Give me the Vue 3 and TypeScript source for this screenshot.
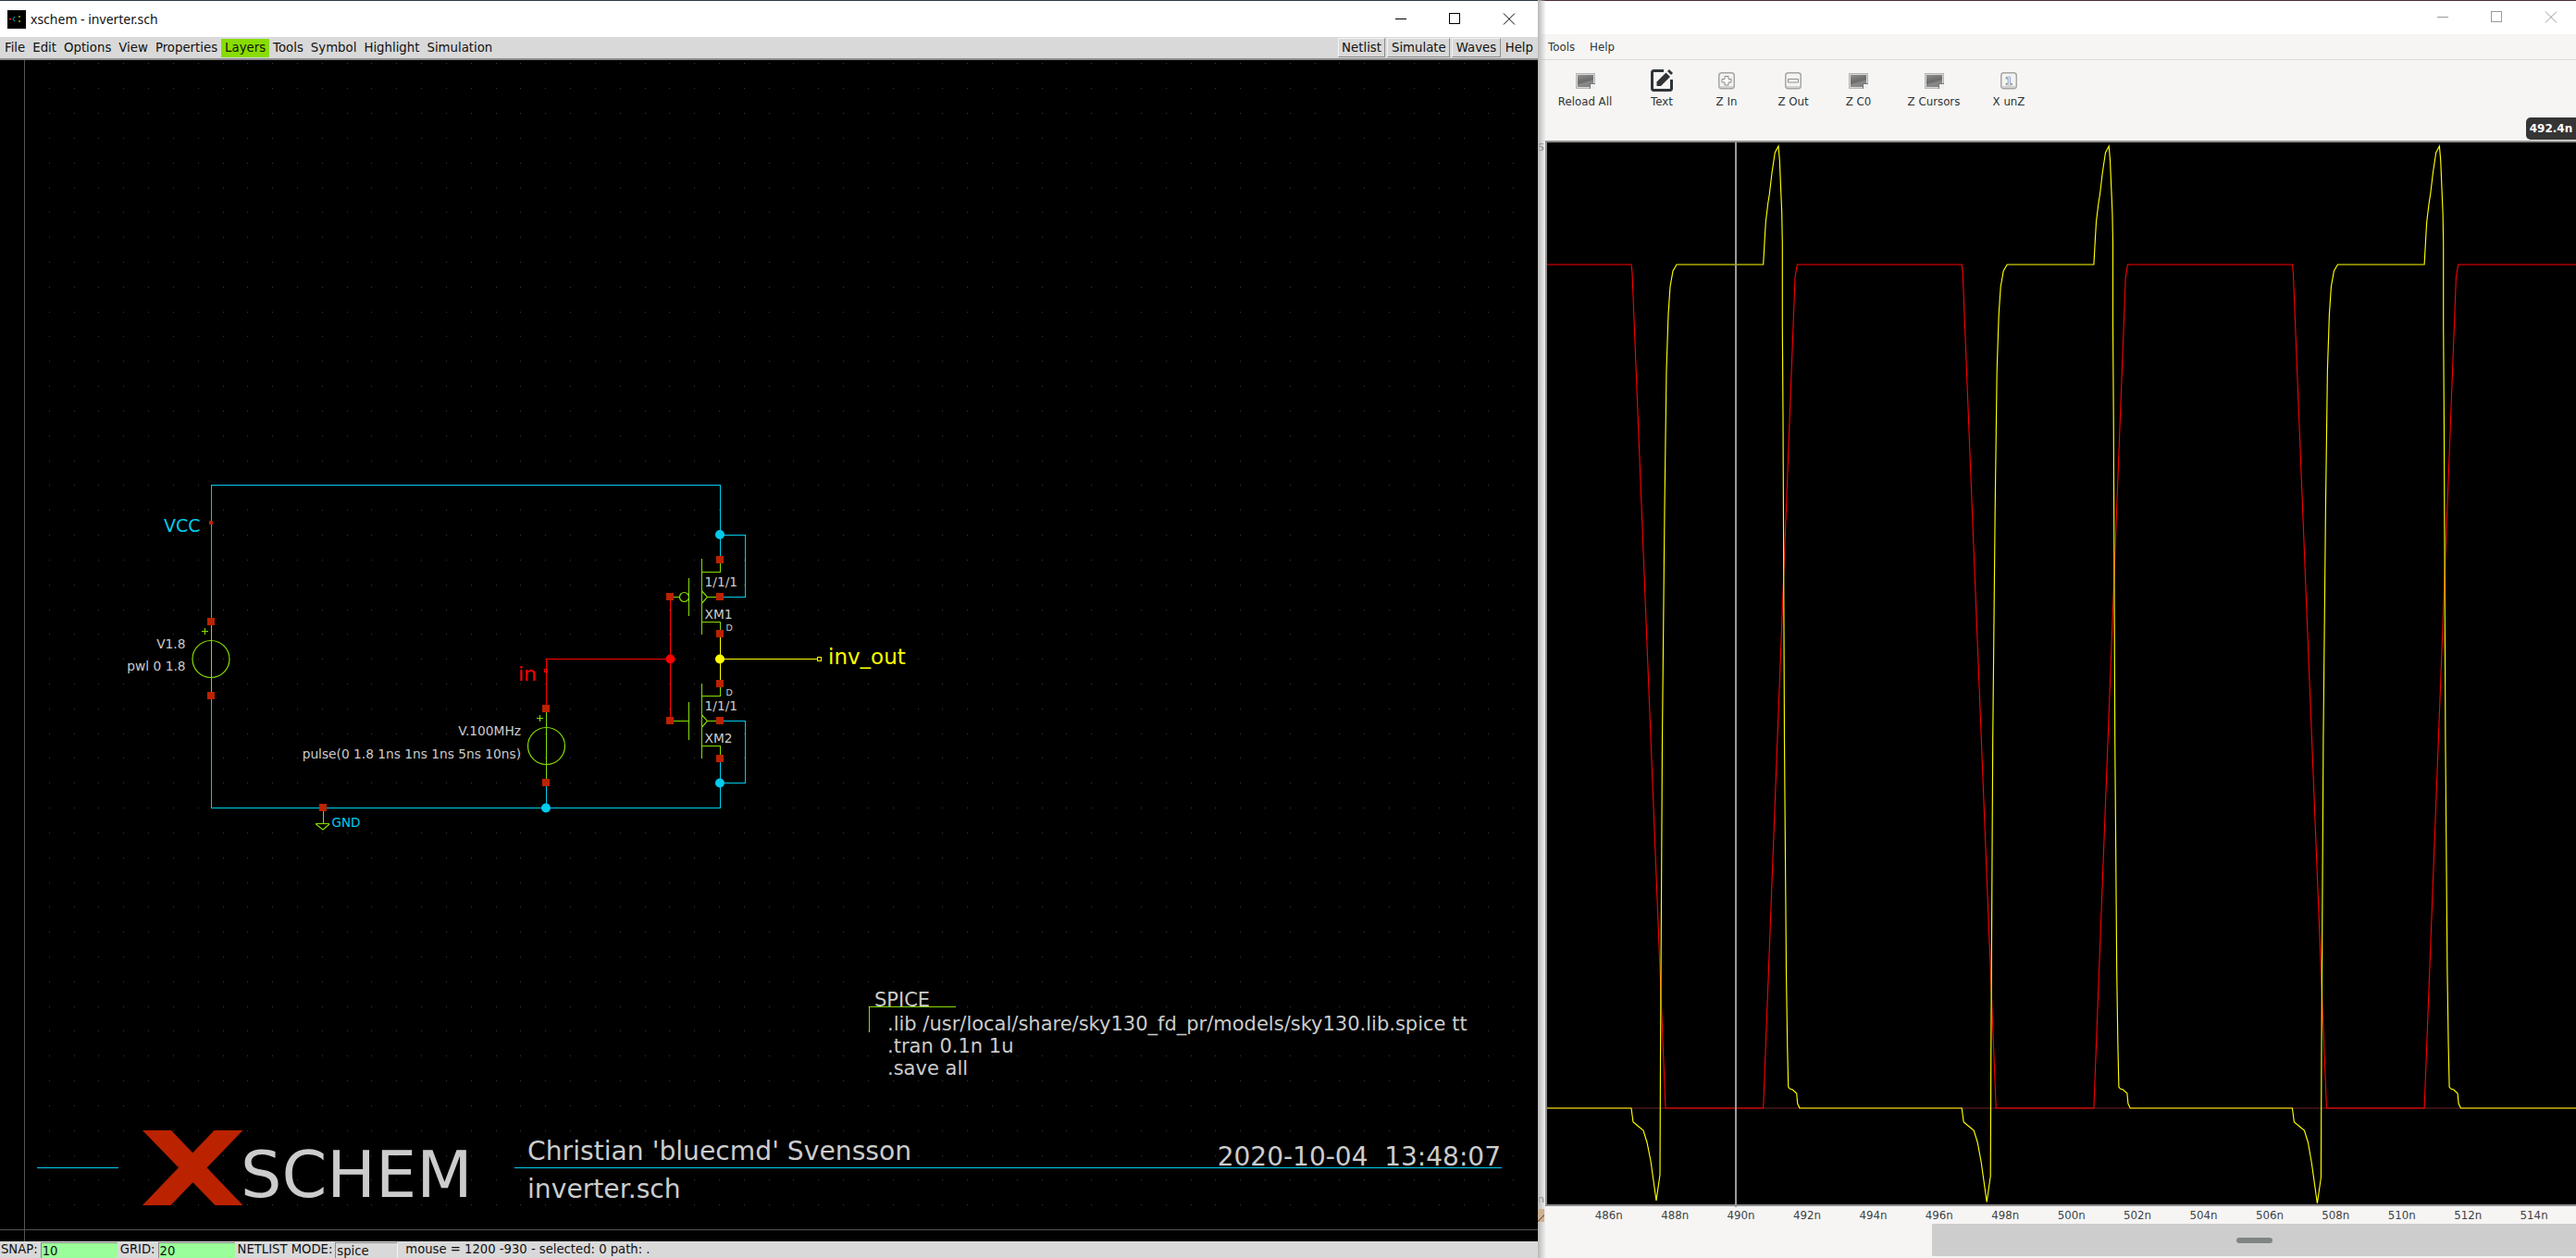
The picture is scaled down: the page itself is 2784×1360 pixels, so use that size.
<script setup lang="ts">
const leftMenu = ['File', 'Edit', 'Options', 'View', 'Properties', 'Layers', 'Tools', 'Symbol', 'Highlight', 'Simulation']
const tools = [
  { label: 'Reload All', icon: 'broken' },
  { label: 'Text', icon: 'edit' },
  { label: 'Z In', icon: 'plus' },
  { label: 'Z Out', icon: 'minus' },
  { label: 'Z C0', icon: 'broken' },
  { label: 'Z Cursors', icon: 'broken' },
  { label: 'X unZ', icon: 'one' },
]
const ticks = ['486n', '488n', '490n', '492n', '494n', '496n', '498n', '500n', '502n', '504n', '506n', '508n', '510n', '512n', '514n']

// grid of the schematic: one dot per 20 units, anchored on the origin axes
const GRID = 26.82
let gridPath = ''
for (let gx = 1; gx < 62; gx++) {
  for (let gy = 0; gy < 49; gy++) {
    const x = Math.round(26 + gx * GRID)
    const y = Math.round(1329 - gy * GRID)
    if (y > 65) gridPath += `M${x} ${y}h1v1h-1z`
  }
}

// one period of the transient simulation, offsets from the input's falling edge
const PERIOD = 357.2
const FIRST = 1763
const LOW = 1198
const HIGH = 286
const redCycle: number[][] = [[0, HIGH], [1, 295], [37, LOW], [142.7, LOW], [177, 300], [179.3, HIGH]]
const yellowCycle: number[][] = [
  [0, LOW], [2, 1213], [8, 1218], [13, 1222], [17, 1235], [21, 1255], [27, 1298], [31, 1270], [31.5, 1150],
  [33.5, 800], [36, 550], [38, 400], [40, 340], [42, 310], [45, 293], [49, HIGH], [142.7, HIGH], [144.3, 257],
  [145.3, 240], [147.7, 220], [149.3, 210], [152, 187], [155.3, 165], [159, 158], [160.3, 173], [162.7, 230],
  [163.3, 263], [163.3, 350], [164, 450], [165.5, 800], [167.5, 1050], [168.7, 1130], [169.7, 1175], [171.3, 1177],
  [174.3, 1178], [178.7, 1182], [179.7, 1193], [182, LOW],
]
function wave(cycle: number[][], startY: number, endY: number, droop: number): string {
  let d = `M1672 ${startY}`
  for (let k = 0; k < 3; k++) {
    for (const [dx, y] of cycle) {
      const yy = droop && y > 1250 ? y + k * droop : y
      d += `L${(FIRST + k * PERIOD + dx).toFixed(1)} ${yy}`
    }
  }
  return d + `L2784 ${endY}`
}
const redWave = wave(redCycle, HIGH, HIGH, 0)
const yellowWave = wave(yellowCycle, LOW, LOW, 1.5)
</script>

<template>
  <div class="desktop">
    <section class="schem">
      <header class="title">
        <svg class="app-icon" width="20" height="20" viewBox="0 0 20 20">
          <rect width="20" height="20" fill="#000" />
          <path d="M8 7 6 9.5 8 12" fill="none" stroke="#00ccee" stroke-width="1" />
          <path d="M13 6v2M13 11v2" stroke="#88dd00" stroke-width="1.4" />
          <rect x="2" y="9" width="2" height="1.4" fill="#ff2200" />
        </svg>
        <span class="title-text">xschem - inverter.sch</span>
        <svg class="controls" width="130" height="14" viewBox="0 0 130 14" stroke="#000" fill="none">
          <path d="M0 6.5h12" />
          <rect x="58.5" y="0.5" width="11" height="11" />
          <path d="M117 0.5 129 12.5M129 0.5 117 12.5" />
        </svg>
      </header>
      <nav class="menu">
        <span v-for="m in leftMenu" :key="m" class="menu-item" :class="{ active: m === 'Layers' }">{{ m }}</span>
        <span class="menu-end">
          <span class="raised">Netlist</span>
          <span class="raised">Simulate</span>
          <span class="raised">Waves</span>
          <span class="menu-item help">Help</span>
        </span>
      </nav>
      <div class="canvas">
        <svg class="drawing" width="1662" height="1277" viewBox="0 65 1662 1277">
          <path :d="gridPath" fill="#383838" />
          <g shape-rendering="crispEdges" fill="none" stroke-width="1">
            <path d="M26.5 65V1342M0 1329.5H1662" stroke="#555" />
            <g stroke="#00ccee">
              <path d="M228.5 672V524.5H778.5V605M778.5 578.5H805.5V645.5H778.5" />
              <path d="M228.5 752V873.5H778.5V820M778.5 779.5H805.5V846.5H778.5" />
              <path d="M590.5 846V873" />
              <path d="M40 1262.5H128M556 1262.5H1623" />
            </g>
            <g stroke="#ff0000">
              <path d="M590.5 766V712.5H724.5M724.5 645V779.5" />
              <rect x="588.5" y="723.5" width="3" height="3" />
            </g>
            <g stroke="#ffff00">
              <path d="M778.5 685V739M778.5 712.5H884" />
              <rect x="883.5" y="710.5" width="4" height="4" />
            </g>
            <g stroke="#88dd00">
              <path d="M778.5 605V618.5H758.5M758.5 604V686M758.5 672.5H778.5V685" />
              <path d="M744.5 625V666M724.5 645.5H734M764 645.5H778" />
              <path d="M778.5 739V752.5H758.5M758.5 739V820M758.5 806.5H778.5V820" />
              <path d="M744.5 759V800M724.5 779.5H744M764 779.5H778" />
              <path d="M228.5 672V752M221 678.5V686M217.5 682.5H225" />
              <path d="M590.5 766V846M583.5 772.5V780M580 776.5H587" />
              <path d="M349.5 873V890.5M341 890.5H356" />
              <path d="M1033 1088.5H939.5V1116" />
            </g>
          </g>
          <g fill="none" stroke="#88dd00" stroke-width="1.2">
            <circle cx="739.5" cy="645.5" r="5" />
            <path d="M758.5 639 764.5 645.5 758.5 652M758.5 773 764.5 779.5 758.5 786" />
            <circle cx="228" cy="712.5" r="20" />
            <circle cx="590.5" cy="806.5" r="20" />
            <path d="M341.5 891 349 897 356 891" />
          </g>
          <g fill="#bb2200">
            <rect x="774" y="601" width="8" height="8" />
            <rect x="774" y="641" width="8" height="8" />
            <rect x="774" y="681" width="8" height="8" />
            <rect x="774" y="735" width="8" height="8" />
            <rect x="774" y="775" width="8" height="8" />
            <rect x="774" y="816" width="8" height="8" />
            <rect x="720" y="641" width="8" height="8" />
            <rect x="720" y="775" width="8" height="8" />
            <rect x="224" y="668" width="8" height="8" />
            <rect x="224" y="748" width="8" height="8" />
            <rect x="586" y="762" width="8" height="8" />
            <rect x="586" y="842" width="8" height="8" />
            <rect x="345" y="869" width="8" height="8" />
            <rect x="226" y="563" width="4" height="4" />
          </g>
          <g fill="#00ccee">
            <circle cx="778" cy="578" r="5" />
            <circle cx="778" cy="846.5" r="5" />
            <circle cx="590" cy="873.5" r="5" />
          </g>
          <circle cx="724.5" cy="712.5" r="5" fill="#ff0000" />
          <circle cx="778" cy="712.5" r="5" fill="#ffff00" />

          <g class="sch-text">
            <text class="cyan" x="177" y="575" font-size="19">VCC</text>
            <text class="cyan" x="358.5" y="893.5" font-size="13.5">GND</text>
            <text class="red" x="560" y="736" font-size="22">in</text>
            <text class="yellow" x="895" y="718" font-size="23">inv_out</text>
            <text x="200.5" y="701" text-anchor="end" font-size="13.75">V1.8</text>
            <text x="200.5" y="725" text-anchor="end" font-size="13.75">pwl 0 1.8</text>
            <text x="563" y="795" text-anchor="end" font-size="13.75">V.100MHz</text>
            <text x="563" y="819.5" text-anchor="end" font-size="13.75">pulse(0 1.8 1ns 1ns 1ns 5ns 10ns)</text>
            <text x="761.5" y="634" font-size="13.75">1/1/1</text>
            <text x="761.5" y="668.5" font-size="13.75">XM1</text>
            <text x="784.5" y="682" font-size="9.5">D</text>
            <text x="784.5" y="752" font-size="9.5">D</text>
            <text x="761.5" y="767.5" font-size="13.75">1/1/1</text>
            <text x="761.5" y="802.5" font-size="13.75">XM2</text>
            <text x="945" y="1087.5" font-size="21">SPICE</text>
            <text x="959" y="1113.5" font-size="21">.lib /usr/local/share/sky130_fd_pr/models/sky130.lib.spice tt</text>
            <text x="959" y="1137.5" font-size="21">.tran 0.1n 1u</text>
            <text x="959" y="1161.5" font-size="21">.save all</text>
            <text x="570" y="1254" font-size="28.2">Christian 'bluecmd' Svensson</text>
            <text x="570" y="1295" font-size="28.2">inverter.sch</text>
            <text x="1622" y="1260" text-anchor="end" font-size="28">2020-10-04&#160;&#160;13:48:07</text>
            <text x="260" y="1294" font-size="70">SCHEM</text>
          </g>
          <g fill="#bb2200">
            <polygon points="154,1222 185,1222 262.5,1303 232.5,1303" />
            <polygon points="231.5,1222 262.5,1222 184.5,1303 154,1303" />
          </g>
        </svg>
      </div>
      <footer class="status">
        <span>SNAP:</span><span class="entry green snap">10</span>
        <span>GRID:</span><span class="entry green grid">20</span>
        <span>NETLIST MODE:</span><span class="entry mode">spice</span>
        <span class="mouse">mouse = 1200 -930 - selected: 0 path: .</span>
      </footer>
    </section>

    <section class="viewer">
      <div class="shadow"></div>
      <header class="v-title">
        <svg width="130" height="14" viewBox="0 0 130 14" stroke="#9a9a9a" fill="none">
          <path d="M0 6.5h12" />
          <rect x="58.5" y="0.5" width="11" height="11" />
          <path d="M117 0.5 129 12.5M129 0.5 117 12.5" />
        </svg>
      </header>
      <nav class="v-menu"><span>Tools</span><span>Help</span></nav>
      <div class="toolbar">
        <div v-for="t in tools" :key="t.label" class="tool">
          <span class="tool-icon">
            <span v-if="t.icon === 'broken'" class="broken"></span>
            <svg v-else-if="t.icon === 'edit'" width="24" height="24" viewBox="0 0 24 24">
              <path d="M14 1.5H3.5Q1.5 1.5 1.5 3.5V20.5Q1.5 22.5 3.5 22.5H20.5Q22.5 22.5 22.5 20.5V11" fill="none" stroke="#2e3436" stroke-width="3" />
              <path d="M6.5 18V13.5L16.5 3.5 21 8 11 18Z" fill="#2e3436" />
              <path d="M18 2 20 0 24 4 22 6Z" fill="#2e3436" />
            </svg>
            <svg v-else width="18" height="19" viewBox="0 0 18 19">
              <rect x="0.75" y="0.75" width="16.5" height="17" rx="3" fill="#f3f3f2" stroke="#a5a5a3" stroke-width="1.5" />
              <path d="M1.5 16H16.5" stroke="#c9c9c7" stroke-width="1.5" />
              <path v-if="t.icon === 'plus'" d="M7 4.5H11V7.5H14V11H11V14H7V11H4V7.5H7Z" fill="#fff" stroke="#8a8a88" />
              <path v-else-if="t.icon === 'minus'" d="M3.5 7.5H14.5V11H3.5Z" fill="#fff" stroke="#8a8a88" />
              <text v-else x="9" y="14" text-anchor="middle" font-size="12" font-family="'DejaVu Sans', sans-serif" font-weight="700" fill="#fff" stroke="#777" stroke-width="0.7">1</text>
            </svg>
          </span>
          <span class="tool-label">{{ t.label }}</span>
        </div>
      </div>
      <div class="tooltip">492.4n</div>
      <div class="wave-row">
        <div class="gutter"><span>5</span><span>n</span></div>
        <div class="wave-box">
          <svg class="wave" width="1112" height="1148" viewBox="1672 154 1112 1148">
            <path d="M1672 1198H2784" fill="none" stroke="#6a2525" stroke-width="1" />
            <path :d="redWave" fill="none" stroke="#ff0000" stroke-width="1.1" />
            <path :d="yellowWave" fill="none" stroke="#ffff00" stroke-width="1.15" />
            <rect x="1875" y="154" width="2" height="1148" fill="#9a9a9a" />
          </svg>
        </div>
      </div>
      <div class="wave-foot">
        <span class="corner"></span>
        <span class="cursor-tail"></span>
        <div class="ticks"><span v-for="t in ticks" :key="t" class="tick">{{ t }}</span></div>
        <div class="scroll-track"><span class="scroll-thumb"></span></div>
      </div>
    </section>
  </div>
</template>

<style scoped>
.desktop {
  display: flex;
  width: 2784px;
  height: 1360px;
  overflow: hidden;
  background: #000;
  font-family: "DejaVu Sans", sans-serif;
}
.schem {
  display: flex;
  flex-direction: column;
  width: 1662px;
  flex: none;
  height: 1360px;
}
.title {
  display: flex;
  align-items: center;
  height: 40px;
  padding: 0 24px 0 8px;
  background: #fff;
  border-top: 1px solid #2f3840;
  box-sizing: border-box;
}
.app-icon {
  flex: none;
}
.title-text {
  margin-left: 5px;
  font: 14px "Noto Sans", sans-serif;
  color: #111;
}
.controls {
  margin-left: auto;
}
.menu {
  display: flex;
  align-items: center;
  height: 25px;
  padding-left: 1px;
  background: #d9d9d9;
  border-bottom: 2px solid #8a8a8a;
  box-sizing: border-box;
  font-size: 13.3px;
  color: #111;
}
.menu-item {
  padding: 0 4px;
  line-height: 20px;
}
.menu-item.active {
  background: #88dd00;
}
.menu-end {
  display: flex;
  align-items: center;
  gap: 2px;
  margin-left: auto;
  padding-right: 3px;
}
.raised {
  padding: 0 3.5px;
  line-height: 19px;
  border: 1px solid;
  border-color: #f4f4f4 #8d8d8d #8d8d8d #f4f4f4;
}
.help {
  padding: 0 2px 0 3px;
}
.canvas {
  flex: 1;
  min-height: 0;
  background: #000;
  overflow: hidden;
}
.drawing {
  display: block;
}
.sch-text text {
  fill: #cccccc;
  font-family: "DejaVu Sans", sans-serif;
}
.sch-text .cyan {
  fill: #00ccee;
}
.sch-text .red {
  fill: #ff0000;
}
.sch-text .yellow {
  fill: #ffff00;
}
.status {
  display: flex;
  align-items: flex-start;
  height: 18px;
  padding-left: 1px;
  background: #d9d9d9;
  font-size: 13.2px;
  line-height: 18px;
  color: #111;
  overflow: hidden;
  flex: none;
}
.entry {
  height: 19px;
  margin: 1px 3px 0 3px;
  padding-left: 1px;
  box-sizing: border-box;
  border-top: 1px solid #8a8a8a;
  border-left: 1px solid #8a8a8a;
}
.green {
  background: #9aff9a;
}
.snap,
.grid {
  width: 83px;
}
.mode {
  width: 68px;
  border-right: 1px solid #f4f4f4;
}
.mouse {
  margin-left: 5px;
}
.viewer {
  position: relative;
  display: flex;
  flex-direction: column;
  flex: 1;
  min-width: 0;
  height: 1360px;
  background: #f6f5f4;
  font-size: 11.8px;
  color: #2e3436;
}
.shadow {
  position: absolute;
  top: 0;
  bottom: 0;
  left: 0;
  width: 9px;
  background: linear-gradient(90deg, #b8b8b8, rgba(200, 200, 200, 0));
  pointer-events: none;
}
.v-title {
  display: flex;
  align-items: center;
  justify-content: flex-end;
  height: 37px;
  padding-right: 20px;
  background: #fff;
  border-top: 1px solid #4a2b3c;
  box-sizing: border-box;
  flex: none;
}
.v-menu {
  display: flex;
  align-items: center;
  gap: 16px;
  height: 28px;
  padding-left: 11px;
  border-bottom: 1px solid #dcdad7;
  box-sizing: border-box;
  flex: none;
}
.toolbar {
  display: grid;
  grid-template-columns: 84px 82px 58px 86px 55px 108px 54px;
  height: 87px;
  padding: 9px 0 0 9px;
  box-sizing: border-box;
  flex: none;
}
.tool {
  display: flex;
  flex-direction: column;
  align-items: center;
}
.tool-icon {
  display: flex;
  align-items: center;
  justify-content: center;
  height: 26px;
  margin-top: 0;
}
.tool-label {
  margin-top: 3px;
  line-height: 14px;
  white-space: nowrap;
}
.broken {
  position: relative;
  display: block;
  width: 21px;
  height: 17px;
  box-sizing: border-box;
  border: 2px solid #d9d9d7;
  outline: 1px solid #b4b4b2;
  outline-offset: -1px;
  background: linear-gradient(165deg, #8f8f8f, #6a6a6a 50%, #8a8a8a 65%, #7d7d7d);
}
.broken::after {
  content: "";
  position: absolute;
  right: -2px;
  bottom: -2px;
  width: 5px;
  height: 5px;
  background: #efefee;
  border-top: 1px solid #777;
  border-left: 1px solid #777;
}
.tooltip {
  position: absolute;
  top: 127px;
  right: 0;
  width: 54px;
  height: 24px;
  border-radius: 5px 0 0 5px;
  background: #353535;
  color: #fff;
  font-weight: 700;
  font-size: 12px;
  line-height: 24px;
  text-align: center;
  white-space: nowrap;
}
.wave-row {
  display: flex;
  flex: none;
  height: 1152px;
}
.gutter {
  display: flex;
  flex-direction: column;
  justify-content: space-between;
  width: 8px;
  flex: none;
  overflow: hidden;
  font-size: 11px;
  line-height: 14px;
  color: #555;
  padding: 1px 0 0 0;
  box-sizing: border-box;
}
.wave-box {
  flex: 1;
  min-width: 0;
  background: #000;
  border: solid #908f8d;
  border-width: 2px 0 2px 2px;
  overflow: hidden;
}
.wave {
  display: block;
}
.wave-foot {
  position: relative;
  flex: 1;
  min-height: 0;
}
.corner {
  position: absolute;
  left: 0;
  top: 3px;
  width: 7px;
  height: 14px;
  background: linear-gradient(135deg, #cdb190 60%, #8a6f55 60%, #8a6f55 70%, #cdb190 70%);
}
.cursor-tail {
  position: absolute;
  left: 213px;
  top: -2px;
  width: 2px;
  height: 3px;
  background: #9a9a9a;
}
.ticks {
  display: flex;
  height: 19px;
  padding-left: 41px;
  align-items: center;
  font-size: 11.8px;
  color: #3c4143;
}
.tick {
  width: 71.43px;
  flex: none;
  text-align: center;
}
.scroll-track {
  display: flex;
  align-items: center;
  justify-content: center;
  height: 35px;
  margin-left: 426px;
  background: #cdcdcd;
}
.scroll-thumb {
  display: block;
  width: 39px;
  height: 6px;
  border-radius: 3px;
  background: #7f8585;
}
</style>

<style>
html,
body {
  margin: 0;
  background: #000;
  overflow: hidden;
}
</style>
